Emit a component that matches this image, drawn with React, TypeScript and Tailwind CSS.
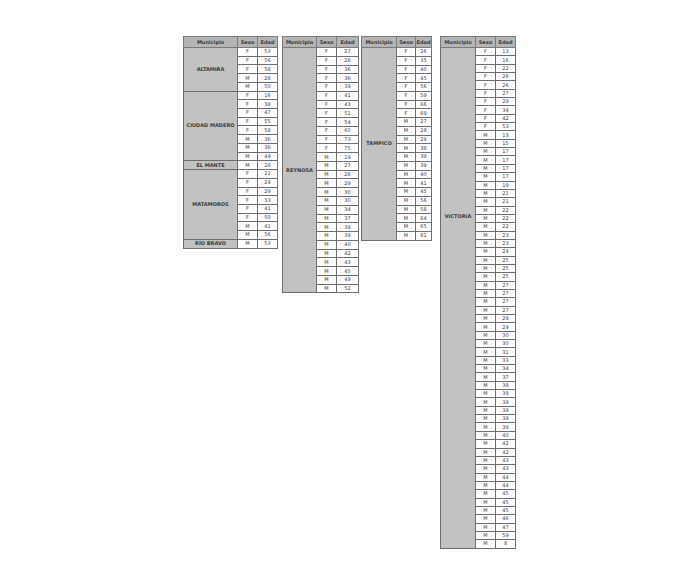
type Group = { name: string; rows: [string, number][]; labelTop?: string };

const mk = (sexo: string, edades: number[]): [string, number][] => edades.map((e) => [sexo, e]);

const tabla1: Group[] = [
  { name: "ALTAMIRA", rows: [...mk("F", [53, 56, 58]), ...mk("M", [28, 50])] },
  { name: "CIUDAD MADERO", rows: [...mk("F", [16, 38, 47, 55, 58]), ...mk("M", [36, 38, 49])] },
  { name: "EL MANTE", rows: mk("M", [28]) },
  { name: "MATAMOROS", rows: [...mk("F", [21, 24, 29, 33, 41, 50]), ...mk("M", [41, 56])] },
  { name: "RÍO BRAVO", rows: mk("M", [53]) },
];

const tabla2: Group[] = [
  {
    name: "REYNOSA",
    rows: [
      ...mk("F", [27, 28, 36, 36, 39, 41, 43, 51, 54, 60, 73, 75]),
      ...mk("M", [19, 27, 28, 29, 30, 30, 34, 37, 39, 39, 40, 42, 43, 45, 49, 52]),
    ],
  },
];

const tabla3: Group[] = [
  {
    name: "TAMPICO",
    rows: [
      ...mk("F", [26, 35, 40, 45, 56, 59, 66, 69]),
      ...mk("M", [27, 28, 29, 38, 38, 39, 40, 41, 45, 56, 58, 64, 65, 81]),
    ],
  },
];

// el nombre de Victoria no va centrado, queda arriba
const tabla4: Group[] = [
  {
    name: "VICTORIA",
    labelTop: "align-top pt-[166px]",
    rows: [
      ...mk("F", [13, 16, 22, 26, 26, 27, 29, 34, 42, 53]),
      ...mk("M", [
        13, 15, 17, 17, 17, 17, 19, 21, 21, 22, 22, 22, 23, 23, 24, 25, 25, 25, 27, 27, 27, 27, 29, 29, 30, 30,
        31, 33, 34, 37, 38, 39, 39, 39, 39, 39, 40, 42, 42, 43, 43, 44, 44, 45, 45, 45, 46, 47, 59, 8,
      ]),
    ],
  },
];

function Tabla({
  groups,
  cols,
  rowH,
  className,
}: {
  groups: Group[];
  cols: [number, number, number];
  rowH: string;
  className: string;
}) {
  return (
    <table className={`border-collapse border border-[#8a8a8a] text-[5px] leading-none text-[#3a3a3a] ${className}`}>
      <colgroup>
        <col style={{ width: cols[0] }} />
        <col style={{ width: cols[1] }} />
        <col style={{ width: cols[2] }} />
      </colgroup>
      <thead>
        <tr className="h-[11px] bg-[#b5b5b5] font-bold">
          <th className="border border-[#7a7a7a] p-0 text-center">Municipio</th>
          <th className="border border-[#7a7a7a] p-0 text-center">Sexo</th>
          <th className="border border-[#7a7a7a] p-0 text-center">Edad</th>
        </tr>
      </thead>
      <tbody>
        {groups.map((g) =>
          g.rows.map(([s, e], i) => (
            <tr key={g.name + i} className={rowH}>
              {i === 0 && (
                <td
                  rowSpan={g.rows.length}
                  className={`border border-[#6e6e6e] bg-[#c2c2c2] px-0 text-center font-bold ${
                    g.labelTop ?? "py-0 align-middle"
                  }`}
                >
                  {g.name}
                </td>
              )}
              <td className="border border-[#6e6e6e] bg-white p-0 text-center">{s}</td>
              <td className="border border-[#6e6e6e] bg-white p-0 text-center">{e}</td>
            </tr>
          ))
        )}
      </tbody>
    </table>
  );
}

export default function App() {
  return (
    <div className="h-[568px] w-[696px] bg-white font-['DejaVu_Sans',sans-serif]">
      <div className="flex items-start pl-[183px] pt-[36px]">
        <Tabla groups={tabla1} cols={[54, 20, 20]} rowH="h-[8.73px]" className="" />
        <Tabla groups={tabla2} cols={[34, 20, 22]} rowH="h-[8.78px]" className="ml-[4px]" />
        <Tabla groups={tabla3} cols={[35, 19, 16]} rowH="h-[8.76px]" className="ml-[2px]" />
        <Tabla groups={tabla4} cols={[35, 20, 20]} rowH="h-[8.35px]" className="ml-[8px]" />
      </div>
    </div>
  );
}
